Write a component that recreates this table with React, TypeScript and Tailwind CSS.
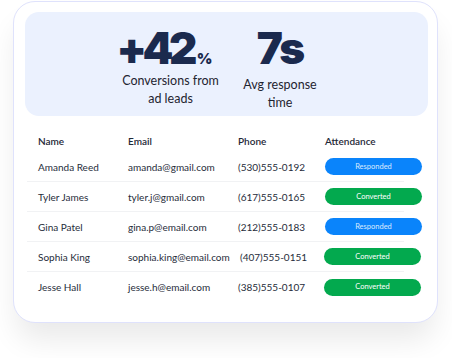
import React from 'react';

type Status = 'Responded' | 'Converted';

interface Lead {
  name: string;
  email: string;
  phone: string;
  status: Status;
  phoneShift?: boolean;
}

const leads: Lead[] = [
  { name: 'Amanda Reed', email: 'amanda@gmail.com', phone: '(530)555-0192', status: 'Responded' },
  { name: 'Tyler James', email: 'tyler.j@gmail.com', phone: '(617)555-0165', status: 'Converted' },
  { name: 'Gina Patel', email: 'gina.p@email.com', phone: '(212)555-0183', status: 'Responded' },
  { name: 'Sophia King', email: 'sophia.king@email.com', phone: '(407)555-0151', status: 'Converted', phoneShift: true },
  { name: 'Jesse Hall', email: 'jesse.h@email.com', phone: '(385)555-0107', status: 'Converted' },
];

function StatusPill({ status }: { status: Status }) {
  const color = status === 'Responded' ? 'bg-[#0a84fb] text-[#dbeafe]' : 'bg-[#03a94e] text-white';
  return (
    <div className={`w-[97px] h-[17px] rounded-full flex items-center justify-center text-[7.5px] ${color}`}>
      {status}
    </div>
  );
}

export default function App() {
  return (
    <div
      className="w-[452px] h-[358px] bg-white pl-[13px] pt-[1px]"
      style={{ fontFamily: 'Lato, "Noto Sans", sans-serif' }}
    >
      <div className="w-[425px] h-[322px] bg-white border border-[#dfe2fc] rounded-[22px] pl-[11px] pr-[9px] pt-[10px] shadow-[0_20px_30px_-4px_rgba(0,0,0,0.09)]">
        {/* stats */}
        <div className="h-[104px] bg-[#ebf1fe] rounded-[14px] flex pl-[88px]">
          <div className="w-[115px] flex flex-col items-center pt-[17px] whitespace-nowrap">
            <div className="flex items-baseline pr-[12px] text-[#1b2a4e] font-black leading-[38px] font-[Inter]">
              <span className="text-[44px] tracking-[-4.5px]">+42</span>
              <span className="text-[15px] leading-none ml-[4px]">%</span>
            </div>
            <div className="text-[12.5px] text-[#1f2430] text-center leading-[18px] mt-[5px]">
              Conversions from
              <br />
              ad leads
            </div>
          </div>
          <div className="w-[90px] ml-[7px] flex flex-col items-center pt-[17px] whitespace-nowrap">
            <div className="text-[44px] text-[#1b2a4e] font-black leading-[38px] tracking-[-2px] font-[Inter]">7s</div>
            <div className="text-[12.5px] text-[#1f2430] text-center leading-[18px] mt-[9px]">
              Avg response
              <br />
              time
            </div>
          </div>
        </div>

        {/* table */}
        <div className="ml-[2px] w-[377px] mt-[14px]">
          <div className="grid grid-cols-[90px_110px_87px_1fr] pl-[11px] h-[22px] items-center text-[10px] font-semibold text-[#1f2937]">
            <div>Name</div>
            <div>Email</div>
            <div>Phone</div>
            <div>Attendance</div>
          </div>
          {leads.map((lead, i) => (
            <div
              key={lead.email}
              className={`grid grid-cols-[90px_110px_87px_1fr] pl-[11px] h-[30px] items-center text-[10px] text-[#262c3a] ${
                i < leads.length - 1 ? 'border-b border-[#f1f2f4]' : ''
              }`}
            >
              <div className="pt-[1px]">{lead.name}</div>
              <div className="pt-[1px]">{lead.email}</div>
              <div className={`pt-[1px] ${lead.phoneShift ? 'pl-[2px]' : ''}`}>{lead.phone}</div>
              <div className={lead.phoneShift || i === 4 ? '-ml-[1px]' : ''}>
                <StatusPill status={lead.status} />
              </div>
            </div>
          ))}
        </div>
      </div>
    </div>
  );
}
